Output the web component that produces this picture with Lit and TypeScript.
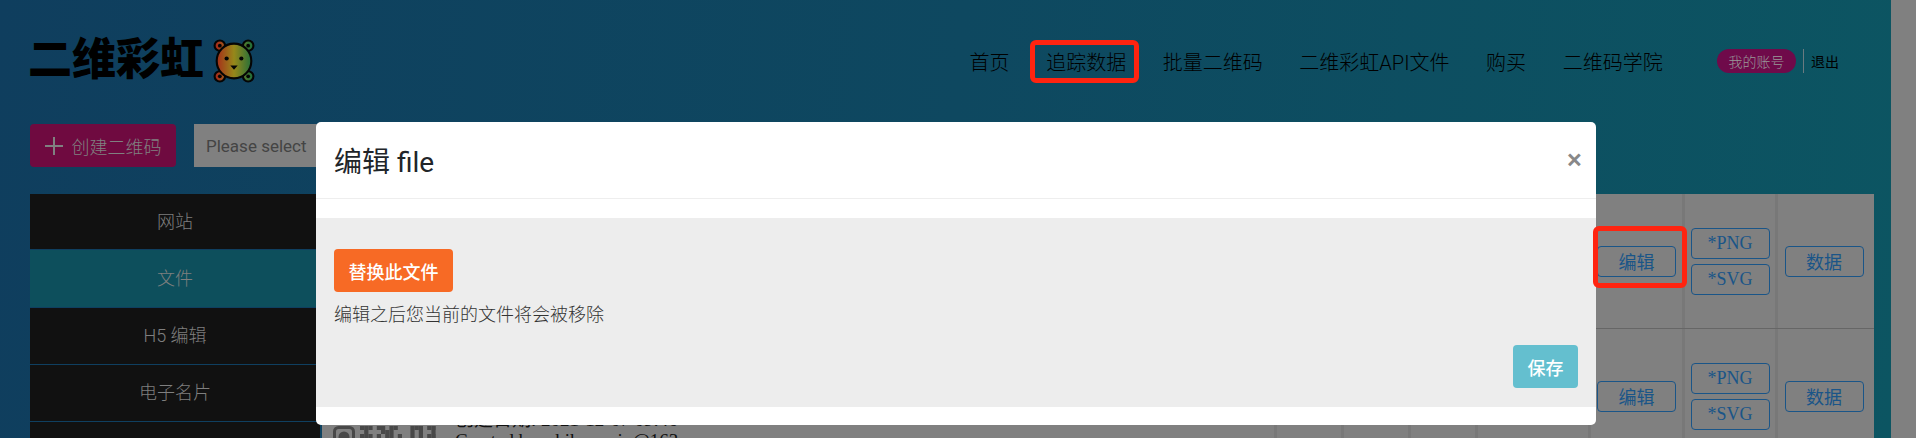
import { LitElement, html, css, svg } from "lit";
import { customElement } from "lit/decorators.js";

const NAV = ["首页", "追踪数据", "批量二维码", "二维彩虹API文件", "购买", "二维码学院"];
const SIDE = ["网站", "文件", "H5 编辑", "电子名片", "多链接"];

const QR_ROWS = [
  "1110110110.0111.111",
  ".1..0111.0.01.1..1.",
  "111.1.11.1..1.1.111",
];
const qrCells = QR_ROWS.flatMap((r, y) =>
  [...r].map((c, x) =>
    c === "1" ? svg`<rect x=${27 + x * 4.2} y=${y * 4} width="4.2" height="4"/>` : svg``
  )
);

const bear = svg`<svg width="42" height="44" viewBox="0 0 40 43" preserveAspectRatio="none">
  <defs><linearGradient id="rb" gradientUnits="userSpaceOnUse" x1="2" x2="38" y1="0" y2="0">
    <stop offset="0" stop-color="#a8261a"/><stop offset=".5" stop-color="#96881a"/><stop offset="1" stop-color="#1c6e3c"/></linearGradient></defs>
  <g fill="url(#rb)" stroke="#050505" stroke-width="2">
    <circle cx="6.500" cy="6.500" r="5"/><circle cx="33.500" cy="6.500" r="5"/><circle cx="6.500" cy="36.500" r="5"/><circle cx="33.500" cy="36.500" r="5"/>
    <ellipse cx="20" cy="21.500" rx="16.500" ry="17"/>
  </g>
  <g fill="#050505">
    <circle cx="6.500" cy="6.500" r="1.800"/><circle cx="33.500" cy="6.500" r="1.800"/><circle cx="6.500" cy="36.500" r="1.800"/><circle cx="33.500" cy="36.500" r="1.800"/>
    <circle cx="13" cy="19" r="2"/><circle cx="27" cy="19" r="2"/><path d="M16.500 26h7l-3.500 4z"/>
  </g></svg>`;

@customElement("app-root")
export class AppRoot extends LitElement {
  static styles = css`
    :host { display: block; width: 1916px; height: 438px; overflow: hidden; position: relative;
      font-family: Roboto, "Noto Sans CJK SC", sans-serif; }
    .page { height: 438px; width: 1891px; background: linear-gradient(95deg, #0f3e5e 0%, #0e4860 50%, #0c5562 100%);
      padding-left: 30px; box-sizing: border-box; overflow: hidden; }
    .scrollbar { position: absolute; top: 0; right: 0; bottom: 0; width: 25px; background: #808080; }
    header { height: 124px; display: flex; align-items: flex-start; }
    .logo { display: flex; align-items: center; gap: 9px; margin: 39px 0 0 -2px; height: 43px; font-size: 44px; font-weight: 900; color: #000; line-height: 43px; white-space: nowrap; }
    nav { margin-left: auto; display: flex; align-items: center; height: 42px; margin-top: 40px; color: #000; font-size: 20px; font-weight: 300; white-space: nowrap; }
    nav a { padding: 0 18.3px; }
    .pill { margin-left: 36px; width: 79px; height: 24px; border-radius: 12px; background: #6f0a4a; color: #999; font-size: 14px; display: flex; align-items: center; justify-content: center; }
    .sep { width: 1px; height: 24px; background: #6a7a80; margin: 0 7px 0 7px; }
    .out { font-size: 14px; font-weight: 400; margin-right: 52px; }
    .tools { display: flex; gap: 18px; height: 43px; }
    .create { width: 146px; background: #6f0a40; border-radius: 4px; color: #808080; font-size: 18px; font-weight: 300; display: flex; align-items: center; justify-content: center; gap: 9px; }
    .select { width: 300px; background: #808080; color: #444; font-size: 17px; display: flex; align-items: center; padding-left: 12px; box-sizing: border-box; }
    .main { display: flex; margin-top: 27px; gap: 2px; width: 1844px; }
    .side { width: 290px; flex: none; background: #111; }
    .side div { height: 57px; box-sizing: border-box; padding-bottom: 4px; border-bottom: 1px solid #0f3f60; color: #7f7f7f; font-size: 18px; font-weight: 300; display: flex; align-items: center; justify-content: center; }
    .side div:first-child { height: 56px; }
    .side div.on { background: #0d4f5c; height: 58px; }
    .table { flex: 1; height: 244px; background: #808080; display: flex; flex-direction: column; }
    .row { height: 135px; flex: none; border-bottom: 1px solid #666; display: grid; grid-template-columns: 1fr repeat(3, 67px) 113px 94px 93px 96px; box-sizing: border-box; }
    .cell { border-right: 3px solid #787878; display: flex; flex-direction: column; gap: 5px; align-items: center; justify-content: center; box-sizing: border-box; }
    .cell:last-child { border-right: 0; padding-right: 4px; }
    .qrc { flex-direction: row; justify-content: flex-start; align-items: flex-start; padding-left: 11px; gap: 19px; font: 19px/21px "Liberation Serif", "Noto Sans CJK SC", serif; color: #111; }
    .qr { width: 103px; height: 30px; flex: none; margin-top: 97px; }
    .qr svg { display: block; fill: #484848; }
    .qr .ring { fill: none; stroke: #484848; stroke-width: 3; }
    .meta { margin-top: 80px; white-space: nowrap; }
    .btn { width: 79px; height: 31px; box-sizing: border-box; border: 1px solid #1a5588; border-radius: 4px; color: #1a5588; font: 18px "Liberation Serif", "Noto Sans CJK SC", serif; display: flex; align-items: center; justify-content: center; }
    .overlay { position: absolute; inset: 0; pointer-events: none; }
    .modal { position: absolute; left: 316px; top: 122px; width: 1280px; height: 303px; background: #fff; border-radius: 5px; display: flex; flex-direction: column; overflow: hidden; }
    .mhead { height: 77px; flex: none; box-sizing: border-box; border-bottom: 1px solid #eee; display: flex; align-items: center; justify-content: space-between; padding: 0 14px 0 18px; color: #212529; font-size: 28px; }
    .close { font-size: 28px; font-weight: 500; color: #888; line-height: 28px; }
    .mbody { margin-top: 19px; height: 189px; background: #ededed; padding: 31px 18px 0; box-sizing: border-box; color: #333; font-size: 18px; font-weight: 300; }
    .replace { width: 119px; height: 43px; border-radius: 4px; background: #f76a25; color: #fff; font-weight: 500; display: flex; align-items: center; justify-content: center; }
    .hint { margin-top: 9px; line-height: 27px; }
    .foot { display: flex; justify-content: flex-end; margin-top: 17px; }
    .save { width: 65px; height: 43px; border-radius: 4px; background: #64bfcf; color: #fff; font-weight: 500; display: flex; align-items: center; justify-content: center; }
    .mark { position: absolute; border: 5px solid #ff2410; border-radius: 6px; box-sizing: border-box; }
    .m1 { left: 1030px; top: 40px; width: 109px; height: 43px; }
    .m2 { left: 1593px; top: 226px; width: 94px; height: 62px; }
  `;

  private row(detail: boolean) {
    return html`<div class="row">
      <div class="cell qrc">
        ${detail
          ? html`<div class="qr"><svg width="103" height="30">
                <rect class="ring" x="1.5" y="1.5" width="19" height="19" rx="4"></rect>
                <circle cx="11" cy="11" r="5.5"></circle>
                ${qrCells}
              </svg></div>
              <div class="meta">创建日期: 2021-12-07 09:46<br />Created by: shihyouxin@163.com</div>`
          : ""}
      </div>
      ${[0, 1, 2, 3].map(() => html`<div class="cell"></div>`)}
      <div class="cell"><div class="btn">编辑</div></div>
      <div class="cell"><div class="btn">*PNG</div><div class="btn">*SVG</div></div>
      <div class="cell"><div class="btn">数据</div></div>
    </div>`;
  }

  render() {
    return html`
      <div class="page">
        <header>
          <div class="logo">二维彩虹${bear}</div>
          <nav>
            ${NAV.map((n) => html`<a>${n}</a>`)}
            <div class="pill">我的账号</div><div class="sep"></div><div class="out">退出</div>
          </nav>
        </header>
        <div class="tools">
          <div class="create"><svg width="18" height="18" viewBox="0 0 18 18"><path d="M9 0v18M0 9h18" stroke="#808080" stroke-width="2"/></svg>创建二维码</div>
          <div class="select">Please select</div>
        </div>
        <div class="main">
          <div class="side">${SIDE.map((s, i) => html`<div class=${i === 1 ? "on" : ""}>${s}</div>`)}</div>
          <div class="table">${this.row(false)}${this.row(true)}</div>
        </div>
      </div>
      <div class="scrollbar"></div>
      <div class="overlay">
        <div class="modal">
          <div class="mhead"><span>编辑 file</span><span class="close">×</span></div>
          <div class="mbody">
            <div class="replace">替换此文件</div>
            <div class="hint">编辑之后您当前的文件将会被移除</div>
            <div class="foot"><div class="save">保存</div></div>
          </div>
        </div>
        <div class="mark m1"></div>
        <div class="mark m2"></div>
      </div>`;
  }
}
